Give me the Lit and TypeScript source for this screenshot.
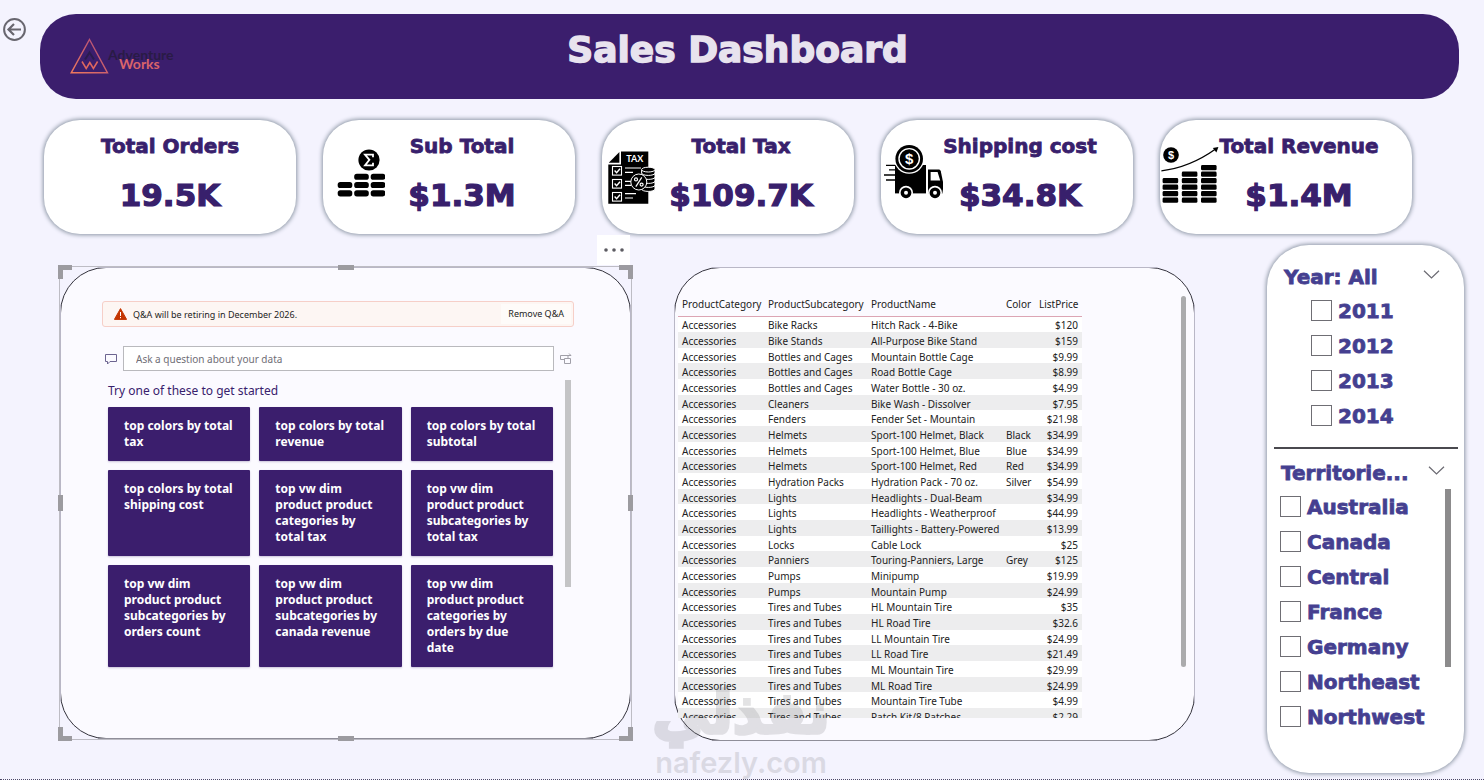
import { LitElement, html, css, svg } from "lit";
import { customElement, property } from "lit/decorators.js";

const DISPLAY = css`"Arial Black", "DejaVu Sans", sans-serif`;
const UI = css`"Segoe UI", "Noto Sans", sans-serif`;

const pill = (x: number, y: number, w: number, h: number) =>
  svg`<rect x=${x} y=${y} width=${w} height=${h} rx="2.6"></rect>`;

const stack = (x: number, count: number) =>
  Array.from({ length: count }, (_, i) => svg`<rect x=${x} y=${77.6 - i * 6.5} width="15.6" height="5.2" rx="1.4"></rect>`);

const ICONS: Record<string, unknown> = {
  sum: svg`
    <circle cx="46" cy="40" r="10.6"></circle>
    <path d="M50 37.2V34.6H42l4.4 5.2L42 45.4h8v-2.6" fill="none" stroke="#fff" stroke-width="1.8"></path>
    ${pill(31.2, 53.8, 14.6, 6)}${pill(47.7, 53.8, 14.6, 6)}
    ${[61.9, 70.2].map((y) => [14.7, 31.2, 47.7].map((x) => pill(x, y, 14.6, 6.2)))}
  `,
  tax: svg`
    <path d="M19 31.6H46.3V83.8H6.3V44.4H19z"></path>
    <path d="M6.8 42.8L17.4 32v10.8z"></path>
    <text x="32.8" y="42" text-anchor="middle" fill="#fff" font-size="9" font-weight="700" font-family="Lato, sans-serif">TAX</text>
    <g fill="none" stroke="#fff" stroke-width="1.1">
      ${[46.5, 59.5, 72.5].map((y) => svg`<rect x="10.5" y=${y} width="9" height="8.6"></rect><path d=${`M12.6 ${y + 4}l2 2.2 3.4-4`} stroke-width="1.4"></path>`)}
      <path d="M23 48h16M23 52.4h8M23 61.4h6M23 65.4h6M23 73.6h11M23 78h8"></path>
    </g>
    <g stroke="#fff" stroke-width="1">
      ${[67, 63, 59, 55, 51].map((y) => svg`<path d=${`M39.6 ${y - 1}v3c0 3.2 13.4 3.2 13.4 0v-3z`}></path>`)}
      <ellipse cx="46.3" cy="49.6" rx="6.7" ry="2.4"></ellipse>
      <circle cx="36.8" cy="62" r="8"></circle>
    </g>
    <g fill="none" stroke="#fff" stroke-width="1.2">
      <path d="M39.8 57.4L33.8 66.6"></path><circle cx="34" cy="59.4" r="1.5"></circle><circle cx="39.6" cy="64.6" r="1.5"></circle>
    </g>
  `,
  truck: svg`
    <path d="M14 45h31v28.4H14z"></path>
    <path d="M47 49.4h10.4c1.4 0 2 .6 2.4 1.8L62 62v7l-.6 4.4H47z"></path>
    <path d="M49.6 52h7l2.6 8.6h-9.6z" fill="#fff"></path>
    <path d="M5 45.4h9M8 49.8h6M3 55h11M5 60h9" stroke="#000" stroke-width="1.3"></path>
    <circle cx="28.2" cy="38.8" r="15" fill="#fff"></circle>
    <circle cx="28.2" cy="38.8" r="13.8"></circle>
    <circle cx="28.2" cy="38.8" r="10.2" fill="none" stroke="#fff" stroke-width="1.4"></circle>
    <text x="28.2" y="44.4" text-anchor="middle" fill="#fff" font-size="15" font-weight="700" font-family="Liberation Sans, sans-serif">$</text>
    ${[25, 54].map((x) => svg`<circle cx=${x} cy="72.8" r="7" fill="#fff"></circle><circle cx=${x} cy="72.8" r="5.4"></circle><circle cx=${x} cy="72.8" r="2" fill="#fff"></circle>`)}
  `,
  growth: svg`
    <circle cx="11" cy="35" r="7.8"></circle>
    <text x="11" y="39" text-anchor="middle" fill="#fff" font-size="11" font-weight="700" font-family="Liberation Sans, sans-serif">$</text>
    <path d="M1.4 50.8C20 48.6 38 41.6 55.6 29" fill="none" stroke="#000" stroke-width="1.3"></path>
    <path d="M58.4 27L52.8 28l3.6 4.6z"></path>
    ${stack(2.6, 4)}${stack(21.8, 5)}${stack(41, 6)}
  `,
};

@customElement("kpi-card")
class KpiCard extends LitElement {
  @property() label = "";
  @property() value = "";
  @property() icon = "";

  static styles = css`
    :host {
      display: flex;
      min-width: 0;
      height: 114px;
      background: #fff;
      border-radius: 36px;
      box-shadow: 0 0 4px 1px #8b95a3;
    }
    svg { flex: none; width: 62px; height: 114px; }
    .text {
      flex: 1;
      min-width: 0;
      display: flex;
      flex-direction: column;
      align-items: center;
      padding-top: 12px;
      color: #38206c;
      font-family: ${DISPLAY};
      font-weight: 900;
      white-space: nowrap;
    }
    svg + .text { padding-right: 36px; }
    h2 { margin: 0; font-size: 20px; line-height: 28px; font-weight: 900; -webkit-text-stroke: 0.04em; }
    p { margin: 14px 0 0; font-size: 31px; line-height: 42px; -webkit-text-stroke: 0.04em; }
  `;

  render() {
    return html`
      ${this.icon ? html`<svg viewBox="0 0 62 114" aria-hidden="true">${ICONS[this.icon]}</svg>` : ""}
      <div class="text"><h2>${this.label}</h2><p>${this.value}</p></div>
    `;
  }
}

/* Straight runs of a panel outline are light; only the rounded corners stay dark. */
const softEdges = css`
  :host::before {
    content: "";
    position: absolute;
    inset: -1px;
    pointer-events: none;
    background:
      linear-gradient(#b9b7c6, #b9b7c6) 50% 0 / calc(100% - 76px) 1px no-repeat,
      linear-gradient(#8f8e99, #8f8e99) 50% 100% / calc(100% - 76px) 1px no-repeat,
      linear-gradient(#b9b7c6, #b9b7c6) 0 50% / 1px calc(100% - 76px) no-repeat,
      linear-gradient(#b9b7c6, #b9b7c6) 100% 50% / 1px calc(100% - 76px) no-repeat;
  }
`;

@customElement("qa-panel")
class QaPanel extends LitElement {
  static styles = [softEdges, css`
    :host {
      position: relative;
      display: flex;
      flex-direction: column;
      box-sizing: border-box;
      border: 1px solid #33323c;
      border-radius: 46px;
      background: #fbfaff;
      padding: 33px 56px 0 41px;
      font-family: ${UI};
    }
    .alert {
      display: flex;
      align-items: center;
      gap: 6px;
      box-sizing: border-box;
      height: 26px;
      padding: 0 2px 0 11px;
      border: 1px solid #f6cfc8;
      border-radius: 3px;
      background: #fdf6f3;
      font-size: 9px;
      color: #242424;
    }
    .alert svg { width: 13px; height: 12px; }
    .alert span { flex: 1; }
    .alert button {
      height: 20px;
      padding: 0 7px;
      border: 0;
      background: #fefbf9;
      color: #242424;
      font: 9px/20px ${UI};
    }
    .ask { display: flex; align-items: center; gap: 6px; margin: 19px 2px 0 3px; }
    .ask svg { flex: none; width: 12px; height: 12px; }
    .ask input {
      flex: 1;
      min-width: 0;
      box-sizing: border-box;
      height: 25px;
      padding: 1px 12px 0;
      border: 1px solid #b9b9bd;
      background: #fff;
      font: 10px/16px ${UI};
      color: #333;
    }
    .ask input::placeholder { color: #6f6e76; opacity: 1; }
    .body { display: flex; justify-content: space-between; gap: 12px; margin: 9px 3px 0 6px; }
    .suggest { flex: 1; }
    h3 { margin: 0; font-size: 12px; line-height: 22px; font-weight: 400; color: #38206c; }
    .tiles { display: grid; grid-template-columns: repeat(3, 1fr); gap: 9px; margin-top: 5px; }
    .tiles button {
      display: flex;
      padding: 11px 16px;
      border: 0;
      border-radius: 1px;
      background: #3b1e6d;
      box-shadow: 0 1px 2px #c9c2da;
      color: #fff;
      font: 700 12px/16px ${UI};
      text-align: left;
    }
    .bar { width: 6px; height: 207px; background: #c4c4c6; }
    .frame { position: absolute; inset: -2px; border: 1px solid #bdbcc4; pointer-events: none; }
    .grip { position: absolute; box-sizing: border-box; border: 0 solid #9c9ba0; width: 14px; height: 14px; }
    .nw { top: -2px; left: -2px; border-width: 5px 0 0 5px; }
    .ne { top: -2px; right: -2px; border-width: 5px 5px 0 0; }
    .sw { bottom: -2px; left: -2px; border-width: 0 0 5px 5px; }
    .se { bottom: -2px; right: -2px; border-width: 0 5px 5px 0; }
    .n, .s { left: calc(50% - 8px); width: 16px; height: 5px; background: #9c9ba0; }
    .e, .w { top: calc(50% - 8px); width: 5px; height: 16px; background: #9c9ba0; }
    .n { top: -2px; } .s { bottom: -2px; } .w { left: -2px; } .e { right: -2px; }
    .more {
      position: absolute;
      right: 0;
      bottom: calc(100% + 3px);
      display: grid;
      place-items: center;
      width: 33px;
      height: 30px;
      padding: 0;
      border: 0;
      background: #fff;
    }
    .more svg { width: 20px; height: 4px; }
  `];

  tiles = [
    "top colors by total tax",
    "top colors by total revenue",
    "top colors by total subtotal",
    "top colors by total shipping cost",
    "top vw dim product product categories by total tax",
    "top vw dim product product subcategories by total tax",
    "top vw dim product product subcategories by orders count",
    "top vw dim product product subcategories by canada revenue",
    "top vw dim product product categories by orders by due date",
  ];

  render() {
    return html`
      <div class="alert">
        <svg viewBox="0 0 13 12" aria-hidden="true">
          <path d="M6.5.6L12.6 11.4H.4z" fill="#c43501" stroke="#c43501" stroke-linejoin="round"></path>
          <path d="M6.5 4v4M6.5 9v1.2" stroke="#fff"></path>
        </svg>
        <span>Q&amp;A will be retiring in December 2026.</span>
        <button>Remove Q&amp;A</button>
      </div>
      <div class="ask">
        <svg viewBox="0 0 12 12" fill="none" stroke="#6c6490" aria-hidden="true"><path d="M.5 1.5h11v7H5L2.5 11V8.500H.5z"></path></svg>
        <input type="text" aria-label="Ask a question" placeholder="Ask a question about your data" />
        <svg viewBox="0 0 12 12" fill="none" stroke="#a09fa8" aria-hidden="true"><path d="M4.500 6.500H.5v-4H11M9 .5l2 2M4.500 5.500h6v5h-6zM8 2.500v3"></path></svg>
      </div>
      <div class="body">
        <div class="suggest">
          <h3>Try one of these to get started</h3>
          <div class="tiles">${this.tiles.map((t) => html`<button>${t}</button>`)}</div>
        </div>
        <div class="bar"></div>
      </div>
      <div class="frame">
        ${["nw", "n", "ne", "e", "se", "s", "sw", "w"].map((g) => html`<i class="grip ${g}"></i>`)}
      </div>
      <button class="more" aria-label="More options">
        <svg viewBox="0 0 20 4" fill="#5c5b62"><circle cx="2" cy="2" r="1.8"></circle><circle cx="10" cy="2" r="1.8"></circle><circle cx="18" cy="2" r="1.8"></circle></svg>
      </button>
    `;
  }
}

const PRODUCTS: [string, string, string, string][] = [
  ["Bike Racks", "Hitch Rack - 4-Bike", "", "$120"],
  ["Bike Stands", "All-Purpose Bike Stand", "", "$159"],
  ["Bottles and Cages", "Mountain Bottle Cage", "", "$9.99"],
  ["Bottles and Cages", "Road Bottle Cage", "", "$8.99"],
  ["Bottles and Cages", "Water Bottle - 30 oz.", "", "$4.99"],
  ["Cleaners", "Bike Wash - Dissolver", "", "$7.95"],
  ["Fenders", "Fender Set - Mountain", "", "$21.98"],
  ["Helmets", "Sport-100 Helmet, Black", "Black", "$34.99"],
  ["Helmets", "Sport-100 Helmet, Blue", "Blue", "$34.99"],
  ["Helmets", "Sport-100 Helmet, Red", "Red", "$34.99"],
  ["Hydration Packs", "Hydration Pack - 70 oz.", "Silver", "$54.99"],
  ["Lights", "Headlights - Dual-Beam", "", "$34.99"],
  ["Lights", "Headlights - Weatherproof", "", "$44.99"],
  ["Lights", "Taillights - Battery-Powered", "", "$13.99"],
  ["Locks", "Cable Lock", "", "$25"],
  ["Panniers", "Touring-Panniers, Large", "Grey", "$125"],
  ["Pumps", "Minipump", "", "$19.99"],
  ["Pumps", "Mountain Pump", "", "$24.99"],
  ["Tires and Tubes", "HL Mountain Tire", "", "$35"],
  ["Tires and Tubes", "HL Road Tire", "", "$32.6"],
  ["Tires and Tubes", "LL Mountain Tire", "", "$24.99"],
  ["Tires and Tubes", "LL Road Tire", "", "$21.49"],
  ["Tires and Tubes", "ML Mountain Tire", "", "$29.99"],
  ["Tires and Tubes", "ML Road Tire", "", "$24.99"],
  ["Tires and Tubes", "Mountain Tire Tube", "", "$4.99"],
  ["Tires and Tubes", "Patch Kit/8 Patches", "", "$2.29"],
];

@customElement("product-table")
class ProductTable extends LitElement {
  static styles = [softEdges, css`
    :host {
      position: relative;
      display: flex;
      justify-content: space-between;
      box-sizing: border-box;
      border: 1px solid #33323c;
      border-radius: 46px;
      background: #fbfaff;
      padding: 24px 8px 22px 3px;
      font-family: ${UI};
    }
    .view { overflow: hidden; height: 0; min-height: 100%; }
    table { border-collapse: collapse; table-layout: fixed; width: 404px; font-size: 10px; line-height: 12px; color: #222; }
    th, td { padding: 0 0 0 4px; text-align: left; font-weight: 400; white-space: nowrap; }
    td { padding-top: 2px; }
    th { height: 24px; box-sizing: border-box; border-bottom: 1px solid #dca5b4; }
    tbody { background: #fff; }
    tbody tr { height: 16px; }
    tbody tr:nth-child(3n) { height: 15px; }
    tbody tr:nth-child(even) { background: #ededee; }
    .cat { width: 86px; } .sub { width: 103px; } .name { width: 135px; } .color { width: 33px; } .price { width: 47px; }
    th:last-child, td:last-child { text-align: right; padding-right: 4px; }
    .bar { width: 5px; height: 371px; margin-top: 4px; border-radius: 3px; background: #ababad; }
  `];

  render() {
    return html`
      <div class="view">
        <table>
          <colgroup><col class="cat" /><col class="sub" /><col class="name" /><col class="color" /><col class="price" /></colgroup>
          <thead><tr><th>ProductCategory</th><th>ProductSubcategory</th><th>ProductName</th><th>Color</th><th>ListPrice</th></tr></thead>
          <tbody>
            ${PRODUCTS.map((row) => html`<tr><td>Accessories</td>${row.map((c) => html`<td>${c}</td>`)}</tr>`)}
          </tbody>
        </table>
      </div>
      <div class="bar"></div>
    `;
  }
}

@customElement("filter-panel")
class FilterPanel extends LitElement {
  static styles = css`
    :host {
      display: block;
      box-sizing: border-box;
      padding: 18px 6px 32px 7px;
      border-radius: 42px;
      background: #fff;
      box-shadow: 0 0 4px 1px #8b95a3;
      font-family: ${DISPLAY};
      font-weight: 900;
      color: #453f90;
    }
    .head { display: flex; justify-content: space-between; padding: 0 18px 2px 10px; }
    .head.low { padding: 0 13px 2px 7px; }
    h2 { margin: 0; font-size: 20px; line-height: 28px; font-weight: 900; }
    h2, label { -webkit-text-stroke: 0.04em; }
    svg { width: 17px; height: 9px; margin-top: 7px; fill: none; stroke: #6b6a72; stroke-width: 1.2; }
    fieldset { margin: 0; padding: 0; border: 0; }
    .years { padding-left: 37px; }
    label { display: flex; align-items: center; gap: 6px; height: 35px; font-size: 20px; line-height: 28px; }
    input { appearance: none; flex: none; width: 21px; height: 21px; margin: 0; border: 1px solid #6f6e74; background: #fff; }
    hr { margin: 14px 0 10px; border: 0; border-top: 2px solid #4a494f; }
    .regions { display: flex; justify-content: space-between; padding: 0 7px 0 6px; }
    .bar { width: 6px; height: 178px; background: #8c8b8c; }
  `;

  box = (name: string) => html`<label><input type="checkbox" />${name}</label>`;
  chevron = html`<svg viewBox="0 0 17 9" aria-hidden="true"><path d="M1 .8l7.500 7.200L16 .8"></path></svg>`;

  render() {
    return html`
      <div class="head"><h2>Year: All</h2>${this.chevron}</div>
      <fieldset class="years" aria-label="Year">${["2011", "2012", "2013", "2014"].map(this.box)}</fieldset>
      <hr />
      <div class="head low"><h2>Territorie...</h2>${this.chevron}</div>
      <div class="regions">
        <fieldset aria-label="Territories">
          ${["Australia", "Canada", "Central", "France", "Germany", "Northeast", "Northwest"].map(this.box)}
        </fieldset>
        <div class="bar"></div>
      </div>
    `;
  }
}

@customElement("app-root")
class AppRoot extends LitElement {
  static styles = css`
    :host {
      position: relative;
      display: flex;
      flex-direction: column;
      box-sizing: border-box;
      min-height: 100vh;
      padding-top: 14px;
      border-bottom: 1px dotted #4d4866;
      background: #f4f3fe;
    }
    .top { display: flex; align-items: flex-start; gap: 12px; padding: 0 25px 0 2px; }
    .back { width: 26px; height: 28px; padding: 0; border: 0; background: none; }
    .back svg { display: block; width: 25px; height: 25px; }
    header {
      flex: 1;
      display: grid;
      grid-template-columns: 1fr auto 1fr;
      box-sizing: border-box;
      height: 85px;
      padding: 0 54px 0 30px;
      border-radius: 36px;
      background: #3b1e6d;
    }
    .logo { width: 110px; height: 38px; margin-top: 23px; }
    h1 { margin: 12px 0 0; font: 900 36px/48px ${DISPLAY}; color: #e8e3ee; -webkit-text-stroke: 0.04em; }
    .kpis { display: grid; grid-template-columns: repeat(5, minmax(0, 1fr)); gap: 27px; padding: 21px 72px 0 44px; }
    main {
      flex: 1;
      display: grid;
      grid-template-columns: minmax(0, 571fr) minmax(0, 636fr) 197px;
      padding: 11px 20px 6px 60px;
    }
    qa-panel { margin: 22px 0 34px; }
    product-table { margin: 22px 72px 32px 43px; }
    .mark { position: absolute; left: 651px; bottom: 0; width: 180px; text-align: center; color: #77777d; opacity: 0.2; pointer-events: none; }
    .mark b { display: block; font: 700 58px/68px "DejaVu Sans", sans-serif; -webkit-text-stroke: 0.06em; }
    .mark span { display: block; font: 600 29px/32px Inter, sans-serif; }
  `;

  render() {
    return html`
      <div class="top">
        <button class="back" aria-label="Back">
          <svg viewBox="0 0 25 25" fill="none" stroke="#68666f" stroke-width="2"><circle cx="12.500" cy="13.500" r="10.400"></circle><path d="M19 13.500H7M12 8l-5.500 5.500L12 19" stroke-width="2.200"></path></svg>
        </button>
        <header>
          <svg class="logo" viewBox="0 0 110 38" role="img" aria-label="Adventure Works">
            <defs><linearGradient id="g" x1="0" y1="1" x2="1" y2="0"><stop offset="0" stop-color="#f07a5c"></stop><stop offset="1" stop-color="#a8487c"></stop></linearGradient></defs>
            <path d="M19.500 2.500L37.500 35.800H1.200z" fill="none" stroke="url(#g)" stroke-width="1.400"></path>
            <path d="M15 22.500l4.500-7 4.500 7" fill="none" stroke="#2a1c4d" stroke-width="2"></path>
            <path d="M12 24.500l4.200 7 3.600-6 3.600 6 4.200-7" fill="none" stroke="#e0685f" stroke-width="1.500"></path>
            <text x="38" y="23" font-family="Lato, sans-serif" font-size="14" font-weight="700" fill="#291b45">Adventure</text>
            <text x="49" y="32" font-family="Lato, sans-serif" font-size="14" font-weight="700" fill="#d9636a">Works</text>
          </svg>
          <h1>Sales Dashboard</h1>
        </header>
      </div>
      <section class="kpis">
        <kpi-card label="Total Orders" value="19.5K"></kpi-card>
        <kpi-card label="Sub Total" value="$1.3M" icon="sum"></kpi-card>
        <kpi-card label="Total Tax" value="$109.7K" icon="tax"></kpi-card>
        <kpi-card label="Shipping cost" value="$34.8K" icon="truck"></kpi-card>
        <kpi-card label="Total Revenue" value="$1.4M" icon="growth"></kpi-card>
      </section>
      <main>
        <qa-panel></qa-panel>
        <product-table></product-table>
        <filter-panel></filter-panel>
      </main>
      <div class="mark" aria-hidden="true"><b lang="ar">نفذلي</b><span>nafezly.com</span></div>
    `;
  }
}
